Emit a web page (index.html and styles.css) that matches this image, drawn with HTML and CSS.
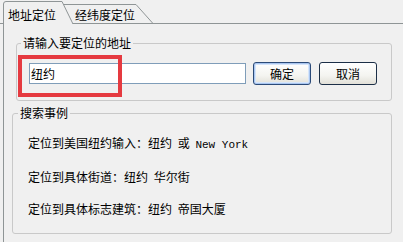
FILE: index.html
```html
<!DOCTYPE html>
<html lang="zh-CN">
<head>
    <meta charset="UTF-8">
    <meta name="viewport" content="width=device-width, initial-scale=1.0">
    <title>地址定位</title>
    <link rel="stylesheet" href="styles.css">
</head>
<body>
    <div class="tabs">
        <div class="tab tab-active">
            <svg class="tab-shape" width="72" height="24" viewBox="0 0 72 24">
                <path d="M1.5 24 V4 Q1.5 1.5 4 1.5 H60 L71 24 Z" fill="#f0f0f0"/>
                <path d="M1.5 24 V4 Q1.5 1.5 4 1.5 H60 L71 24" fill="none" stroke="#8f9596"/>
            </svg>
            <span class="tab-label">地址定位</span>
        </div>
        <div class="tab tab-next">
            <svg class="tab-shape" width="92" height="23" viewBox="0 0 92 23">
                <path d="M0 4.5 H72 L89 23.5" fill="none" stroke="#8f9596"/>
            </svg>
            <span class="tab-label">经纬度定位</span>
        </div>
    </div>

    <div class="panel">
        <fieldset class="group group-address">
            <legend>请输入要定位的地址</legend>
            <div class="row">
                <input class="field" type="text" value="纽约">
                <button class="btn btn-default">确定</button>
                <button class="btn">取消</button>
                <!-- 红色标注框 -->
                <div class="mark"></div>
            </div>
        </fieldset>

        <fieldset class="group group-samples">
            <legend>搜索事例</legend>
            <p class="sample">定位到美国纽约输入：纽约 或 <span class="latin">New York</span></p>
            <p class="sample">定位到具体街道：纽约 华尔街</p>
            <p class="sample">定位到具体标志建筑：纽约 帝国大厦</p>
        </fieldset>
    </div>
</body>
</html>
```

FILE: styles.css
```css
html, body {
    height: 100%;
}
body {
    margin: 0;
    background-color: #f0f0f0;
    color: #000;
    font-family: "Noto Sans CJK SC", "Noto Sans", sans-serif;
    font-size: 12px;
    display: flex;
    flex-direction: column;
    overflow: hidden;
}

/* 标签页 */
.tabs {
    display: flex;
    align-items: flex-end;
    height: 23px;
    padding-left: 2px;
    border-bottom: 1px solid #8f9596;
}
.tab {
    position: relative;
    box-sizing: border-box;
    height: 23px;
}
.tab-shape {
    position: absolute;
    left: 0;
    top: 0;
}
.tab-label {
    position: relative;
    display: block;
    line-height: 16px;
    white-space: nowrap;
}
.tab-active {
    width: 72px;
    height: 24px;
    margin-bottom: -1px;
    padding: 7px 0 0 6px;
    z-index: 1;
}
.tab-next {
    width: 92px;
    margin-left: -10px;
    padding: 7px 0 0 11px;
}

.panel {
    flex: 1;
    margin-left: 3px;
    border-left: 1px solid #8f9596;
}

/* 分组框 */
.group {
    min-width: 0;
    border: 1px solid #c9c9c9;
    border-radius: 3px;
}
.group legend {
    padding: 0 2px;
    line-height: 16px;
}
.group-address {
    margin: 11px 11px 0 12px;
    padding: 11px 0 15px 4px;
}
.group-samples {
    margin: 4px 11px 0 8px;
    padding: 6px 0 8px 5px;
}

.row {
    position: relative;
    display: flex;
    align-items: center;
    height: 23px;
}
.field {
    box-sizing: border-box;
    width: 217px;
    height: 21px;
    margin: 0 7px 0 8px;
    padding: 0 1px;
    border: 1px solid #7f9db9;
    background-color: #fff;
    font-family: inherit;
    font-size: 12px;
    line-height: 19px;
    outline: none;
}
.btn {
    box-sizing: border-box;
    width: 58px;
    height: 23px;
    margin-right: 8px;
    padding: 0;
    border: 1px solid #1c2f47;
    border-radius: 3px;
    background: linear-gradient(#ffffff 0%, #f4f4f0 60%, #e2e0d8 100%);
    font-family: inherit;
    font-size: 12px;
    line-height: 21px;
    color: #000;
}
.btn-default {
    border-color: #2b4a78;
    box-shadow: inset 0 0 0 1px #a9c6f0, inset 0 0 0 2px #d6e5fa;
}
.mark {
    position: absolute;
    left: -3px;
    top: -7px;
    box-sizing: border-box;
    width: 104px;
    height: 42px;
    border: 4px solid #e53a40;
    pointer-events: none;
}

.sample {
    margin: 0 0 0 10px;
    line-height: 32px;
    white-space: nowrap;
    word-spacing: 3px;
}
.latin {
    font-family: "Liberation Mono", monospace;
    font-size: 11px;
    word-spacing: 0;
}
```
